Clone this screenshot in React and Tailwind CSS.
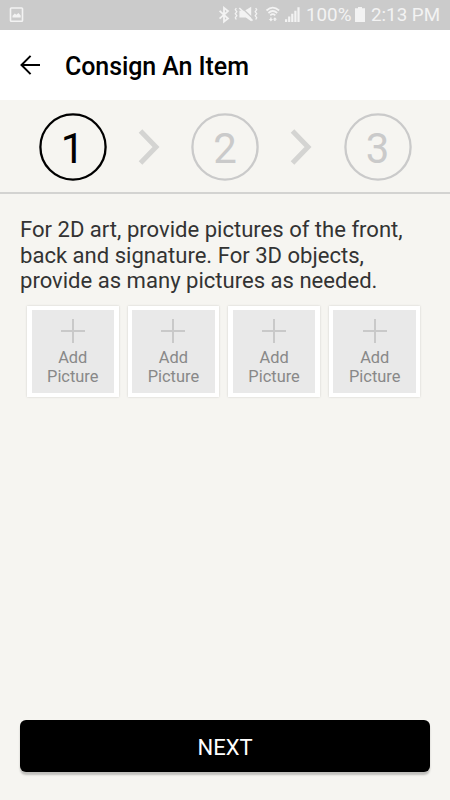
const steps = [1, 2, 3];
const pictures = ['front', 'back', 'signature', 'extra'];

function StatusBar() {
  return (
    <div className="flex h-[30px] items-center bg-[#cbcbcb] text-[#f3f3f3]">
      <svg className="ml-[9px] h-4 w-[15px]" viewBox="0 0 15 16" fill="none">
        <rect x="1.5" y="1" width="12" height="13.2" rx="0.8" stroke="currentColor" strokeWidth="1.6" />
        <path d="M3.5 10.5V8.7l2.3-2.1 1.6 1.2 2-1.8 2.3 2.6v1.9z" fill="currentColor" />
      </svg>

      <svg className="ml-auto h-[30px] w-[84px]" viewBox="216 0 84 30" fill="none" stroke="currentColor">
        <path d="M219.6 10.9l8.4 7.6-4 3.1V7.9l4 3.2-8.4 7.5" strokeWidth="1.8" />
        <path d="M236.3 8l-1 1.7 1.5 2-1.5 2 1.5 2-1.5 2 1 1.8M255.7 8l1 1.7-1.5 2 1.5 2-1.5 2 1.5 2-1 1.8" strokeWidth="1.3" />
        <path d="M239.4 10.8h5.2l6.6-4v14.4l-5.4-3.8h-6.4z" fill="currentColor" stroke="none" />
        <path d="M240.4 6.6l13 12.4" stroke="#cbcbcb" strokeWidth="1.4" />
        <path d="M239.3 8l13.2 12.6" strokeWidth="1.7" />
        <path d="M266.5 10.5q6.3-5.6 12.6 0M268.4 13q4.4-4 8.8 0M270.3 15.3q2.5-2.2 5 0" strokeWidth="1.7" />
        <path d="M270.9 21.4l-2.1-2.3h1.4v-1.6h1.4v1.6h1.4zM274.9 17.2l2.1 2.3h-1.4v1.6h-1.4v-1.6h-1.4z" fill="currentColor" stroke="none" />
        <path d="M286.1 19.2V22M289.2 16.6V22M292.3 13.7V22M295.4 10.7V22M298.5 7.2V22" strokeWidth="2.2" />
      </svg>

      <span className="ml-[6px] w-[46px] text-[18.8px] leading-[30px] whitespace-nowrap">100%</span>
      <svg className="mb-px ml-[3px] h-[15px] w-[10px]" viewBox="0 0 10 15" fill="currentColor">
        <path d="M3 0h4v1.3h3V15H0V1.3h3z" />
      </svg>
      <span className="ml-[6px] w-[69px] text-[18.8px] leading-[30px] whitespace-nowrap">2:13 PM</span>
      <span className="w-[10px]" />
    </div>
  );
}

function Header() {
  return (
    <header className="flex h-[70px] items-center bg-white text-black">
      <button type="button" aria-label="Back" className="ml-5">
        <svg className="mb-px h-5 w-5" viewBox="0 0 20 20" fill="none" stroke="currentColor" strokeWidth="2">
          <path d="M20 10H1.6M10.6 .9L1.5 10l9.1 9.1" />
        </svg>
      </button>
      <h1 className="ml-[25px] pt-[3px] text-[25px] leading-[30px] font-medium tracking-[-0.08px]">Consign An Item</h1>
    </header>
  );
}

function Steps({ current }) {
  return (
    <nav className="flex h-[94px] items-center justify-between border-b-2 border-[#d3d3d1] px-[38.5px] pt-[2px]">
      {steps.map((step) => (
        <div key={step} className="contents">
          {step > 1 && (
            <svg className="h-9 w-[22px]" viewBox="0 0 22 36" fill="none" stroke="#d4d4d2" strokeWidth="5">
              <path d="M2.5 2L18 18 2.5 34" />
            </svg>
          )}
          <div className="relative flex size-[68px] items-center justify-center">
            <svg className="absolute inset-0 size-full" viewBox="0 0 68 68" fill="none">
              <circle cx="34" cy="34" r="32.6" stroke={step === current ? '#000' : '#cacaca'} strokeWidth="2.3" />
            </svg>
            <span className={step === current ? 'pt-[3px] text-[42px] leading-none text-black' : 'pt-[3px] text-[42px] leading-none text-[#cacaca]'}>
              {step}
            </span>
          </div>
        </div>
      ))}
    </nav>
  );
}

function AddPicture() {
  return (
    <button type="button" className="size-[91.5px] bg-white p-[4.5px] shadow-[0_0_2px_rgba(0,0,0,0.16)]">
      <span className="flex size-full flex-col items-center bg-[#e9e9e9] pt-[9px] text-[16.4px] leading-[19px] text-[#888]">
        <svg className="mb-[5px] h-6 w-6 shrink-0" viewBox="0 0 24 24" stroke="#c9c9c9" strokeWidth="2">
          <path d="M12 0v24M0 12h24" />
        </svg>
        <span>Add</span>
        <span>Picture</span>
      </span>
    </button>
  );
}

export default function App() {
  return (
    <div className="flex h-screen w-full flex-col overflow-hidden bg-[#f6f5f1] font-[Roboto,sans-serif]">
      <StatusBar />
      <Header />
      <Steps current={1} />
      <main className="flex flex-1 flex-col px-5 pt-[23px] pb-7">
        <p className="text-[22.07px] leading-[25.7px] whitespace-nowrap text-[#333]">
          For 2D art, provide pictures of the front,
          <br />
          back and signature. For 3D objects,
          <br />
          provide as many pictures as needed.
        </p>
        <div className="mt-[11.5px] flex justify-between pr-[9.5px] pl-[7px]">
          {pictures.map((name) => (
            <AddPicture key={name} />
          ))}
        </div>
        <button
          type="button"
          className="mt-auto h-[52px] rounded-[6px] bg-black pt-[2px] text-[22px] text-white shadow-[0_3px_2px_rgba(0,0,0,0.22)]"
        >
          NEXT
        </button>
      </main>
    </div>
  );
}
